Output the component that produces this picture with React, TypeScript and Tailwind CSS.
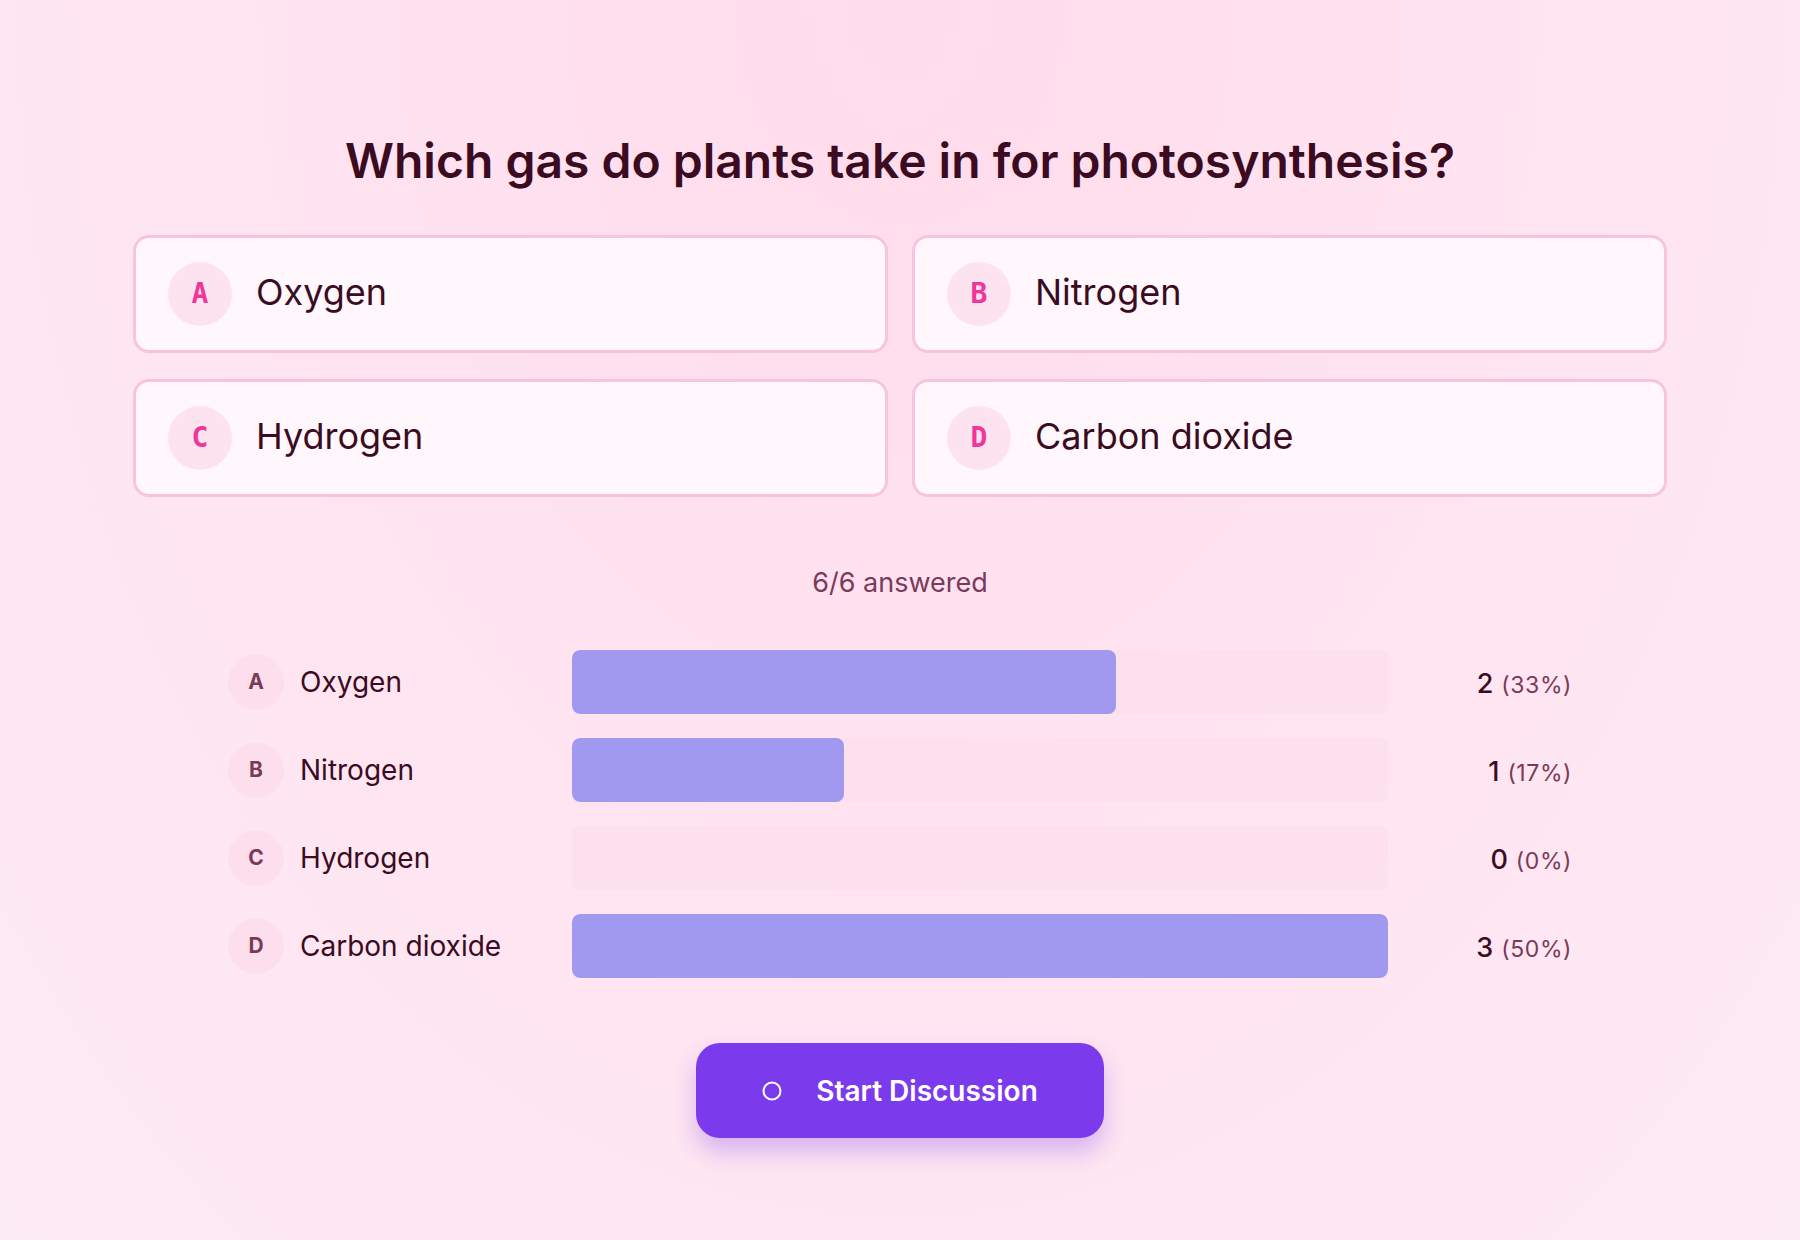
const options = [
  { key: 'A', label: 'Oxygen', votes: 2 },
  { key: 'B', label: 'Nitrogen', votes: 1 },
  { key: 'C', label: 'Hydrogen', votes: 0 },
  { key: 'D', label: 'Carbon dioxide', votes: 3 },
];

const total = options.reduce((s, o) => s + o.votes, 0);
const maxVotes = Math.max(...options.map((o) => o.votes));

function OptionCard({ letter, label }: { letter: string; label: string }) {
  return (
    <div className="flex h-[118px] items-center gap-6 rounded-2xl border-[3px] border-[#f6c5dd] bg-[#fff7fb] px-8">
      <div className="flex h-16 w-16 shrink-0 items-center justify-center rounded-full bg-[#fde3f0]">
        <span className="font-['DejaVu_Sans_Mono',monospace] text-[28px] font-bold text-[#f0369a]">
          {letter}
        </span>
      </div>
      <span className="pb-1 text-[36px] leading-[44px] text-[#3b0b22]">{label}</span>
    </div>
  );
}

function ResultRow({ letter, label, votes }: { letter: string; label: string; votes: number }) {
  const pct = total ? Math.round((votes / total) * 100) : 0;
  const fill = maxVotes ? (votes / maxVotes) * 100 : 0;
  return (
    <div className="grid grid-cols-[320px_1fr_160px] items-center gap-6">
      <div className="flex items-center gap-4">
        <div className="flex h-14 w-14 shrink-0 items-center justify-center rounded-full bg-[#fddeed]">
          <span className="text-[21px] font-bold text-[#7a3a5a]">{letter}</span>
        </div>
        <span className="text-[28px] text-[#3b0b22]">{label}</span>
      </div>
      <div className="h-16 overflow-hidden rounded-lg bg-[#fde0ee]">
        {votes > 0 && (
          <div className="h-full rounded-lg bg-[#a199ef]" style={{ width: `${fill}%` }} />
        )}
      </div>
      <div className="flex items-baseline justify-end gap-2 pt-1">
        <span className="text-[27px] font-medium text-[#3b0b22]">{votes}</span>
        <span className="text-[23px] tracking-wide text-[#7a3a5a]">({pct}%)</span>
      </div>
    </div>
  );
}

export default function App() {
  return (
    <div className="min-h-[1240px] w-full bg-[radial-gradient(ellipse_at_50%_0%,#ffdbec_0%,#ffe3f0_45%,#fdebf4_100%)] font-['Inter',sans-serif]">
      <div className="mx-auto flex w-[1534px] flex-col items-center pt-[130px]">
        <h1 className="text-[48px] font-semibold leading-[62px] text-[#3b0b22]">
          Which gas do plants take in for photosynthesis?
        </h1>

        <div className="mt-[43px] grid w-full grid-cols-2 gap-x-6 gap-y-[26px]">
          {options.map((o) => (
            <OptionCard key={o.key} letter={o.key} label={o.label} />
          ))}
        </div>

        <p className="mt-[68px] text-[27px] leading-[36px] text-[#7a3a5a]">
          {total}/{total} answered
        </p>

        <div className="mt-[49px] flex w-[1344px] flex-col gap-6">
          {options.map((o) => (
            <ResultRow key={o.key} letter={o.key} label={o.label} votes={o.votes} />
          ))}
        </div>

        <button className="mt-[65px] flex h-[95px] w-[408px] items-center justify-center gap-[34px] rounded-3xl bg-[#7c3aed] text-white shadow-[0_14px_24px_rgba(124,58,237,0.3)]">
          <svg width="20" height="20" viewBox="0 0 20 20" fill="none">
            <circle cx="10" cy="10" r="8.5" stroke="white" strokeWidth="2" />
          </svg>
          <span className="text-[28px] font-semibold">Start Discussion</span>
        </button>
      </div>
    </div>
  );
}
